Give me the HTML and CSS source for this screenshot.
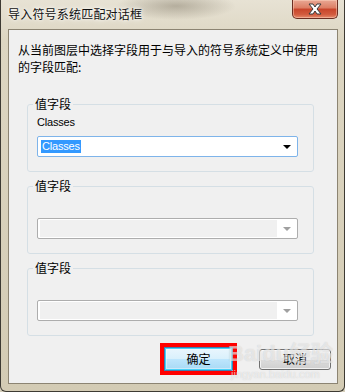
FILE: index.html
```html
<!DOCTYPE html>
<html lang="zh-CN">
<head>
    <meta charset="UTF-8">
    <title>导入符号系统匹配对话框</title>
    <link rel="stylesheet" href="styles.css">
</head>
<body>
    <div class="window">
        <div class="titlebar">
            <span class="title">导入符号系统匹配对话框</span>
            <button class="close" type="button">
                <svg width="16" height="12" viewBox="0 0 16 12">
                    <path d="M2 1h4l2 3 2-3h4l-4 5 4 5h-4l-2-3-2 3H2l4-5z" fill="#fff" stroke="#3a3a3a" stroke-width="1" stroke-linejoin="round"/>
                </svg>
            </button>
        </div>

        <div class="client">
            <p class="intro">从当前图层中选择字段用于与导入的符号系统定义中使用的字段匹配:</p>

            <fieldset class="group">
                <legend>值字段</legend>
                <div class="field-label">Classes</div>
                <div class="combo">
                    <span class="combo-text"><span class="sel">Classes</span></span>
                    <span class="arrow"></span>
                </div>
            </fieldset>

            <fieldset class="group">
                <legend>值字段</legend>
                <div class="field-label"></div>
                <div class="combo disabled">
                    <span class="combo-text"></span>
                    <span class="arrow"></span>
                </div>
            </fieldset>

            <fieldset class="group">
                <legend>值字段</legend>
                <div class="field-label"></div>
                <div class="combo disabled">
                    <span class="combo-text"></span>
                    <span class="arrow"></span>
                </div>
            </fieldset>

            <div class="buttons">
                <span class="mark"><button class="btn default" type="button">确定</button></span>
                <button class="btn" type="button">取消</button>
            </div>
        </div>

        <div class="watermark">
            <span class="wm-logo">Baidu经验</span>
            <span class="wm-url">jingyan.baidu.com</span>
        </div>
    </div>
</body>
</html>
```

FILE: styles.css
```css
body {
    margin: 0;
    background: #d6cfbb;
    font-family: "Noto Sans CJK SC", sans-serif;
    font-size: 12px;
    color: #000;
}

.window {
    position: relative;
    width: 345px;
    height: 392px;
    box-sizing: border-box;
    border: 1px solid #3d3a33;
    border-top: none;
    border-radius: 0 0 6px 6px;
    background:
        radial-gradient(ellipse 60px 14px at 175px 6px, rgba(90, 80, 60, 0.35), transparent),
        linear-gradient(to bottom, #e7e2d4 0, #ddd6c2 40px, #d3cbb4 100%);
    display: flex;
    flex-direction: column;
    overflow: hidden;
}

.titlebar {
    height: 29px;
    display: flex;
    justify-content: space-between;
    align-items: flex-start;
    padding: 0 6px 0 7px;
}

.title {
    padding-top: 5px;
    line-height: 17px;
    font-size: 12px;
    letter-spacing: 0.2px;
    color: #111;
    text-shadow: 0 0 6px #fff, 0 0 3px #fff;
}

.close {
    width: 46px;
    height: 19px;
    margin: 0;
    padding: 0;
    border: 1px solid #6b2e22;
    border-top: none;
    border-radius: 0 0 5px 5px;
    background: linear-gradient(to bottom, #e9a894 0, #dc7d63 45%, #c8442a 50%, #d25b3e 80%, #e58a6c 100%);
    box-shadow: inset 0 0 0 1px rgba(255, 220, 200, 0.45);
    display: flex;
    align-items: center;
    justify-content: center;
}

.client {
    flex: 1;
    margin: 0 6px 7px 7px;
    border: 1px solid #8c8472;
    background: #f0f0f0;
    padding: 11px 0 0 9px;
}

.intro {
    margin: 0;
    width: 302px;
    line-height: 17px;
}

.group {
    margin: 22px 0 0 9px;
    width: 287px;
    box-sizing: border-box;
    border: 1px solid #d5dfe5;
    border-radius: 3px;
    padding: 0 15px 14px 9px;
}

.group + .group {
    margin-top: 7px;
}

.group legend {
    margin-left: -4px;
    padding: 0 2px;
    line-height: 14px;
    font-size: 12px;
}

.field-label {
    height: 14px;
    margin-top: 4px;
    line-height: 14px;
    font-family: "Liberation Sans", sans-serif;
    font-size: 11px;
    letter-spacing: -0.2px;
}

.combo {
    margin-top: 7px;
    width: 261px;
    height: 21px;
    box-sizing: border-box;
    border: 1px solid #7eb4ea;
    border-radius: 2px;
    background: #fff;
    display: flex;
    align-items: center;
}

.combo-text {
    flex: 1;
    height: 15px;
    margin-left: 3px;
    display: flex;
    align-items: center;
}

.sel {
    background: #3399ff;
    color: #fff;
    font-family: "Liberation Sans", sans-serif;
    font-size: 11px;
    letter-spacing: -0.2px;
    line-height: 13px;
    padding: 0 1px;
}

.arrow {
    width: 0;
    height: 0;
    margin: 0 6px 0 6px;
    border-left: 4px solid transparent;
    border-right: 4px solid transparent;
    border-top: 4px solid #000;
}

.combo.disabled {
    border-color: #adadad;
}

.combo.disabled .combo-text {
    height: 17px;
    margin-left: 2px;
    background: #f0f0f0;
}

.combo.disabled .arrow {
    border-top-color: #a0a0a0;
}

.buttons {
    display: flex;
    justify-content: flex-end;
    align-items: center;
    gap: 22px;
    margin-top: 7px;
    padding-right: 6px;
}

.mark {
    border: 4px solid #ff0000;
    display: flex;
}

.btn {
    width: 72px;
    height: 21px;
    margin: 0;
    padding: 0;
    border: 1px solid #707070;
    border-radius: 3px;
    background: linear-gradient(to bottom, #f2f2f2 0, #ebebeb 50%, #dddddd 50%, #cfcfcf 100%);
    box-shadow: inset 0 0 0 1px rgba(255, 255, 255, 0.7);
    font-family: "Noto Sans CJK SC", sans-serif;
    font-size: 12px;
    line-height: 18px;
    color: #000;
}

.btn.default {
    width: 69px;
    height: 24px;
    border-color: #3c7fb1;
    border-radius: 0;
    box-shadow: inset 0 0 0 1px #48d1f8, inset 0 0 0 2px rgba(255, 255, 255, 0.4);
    background: linear-gradient(to bottom, #eaf6fd 0, #d9f0fc 50%, #bee6fd 50%, #a7d9f5 100%);
}

.watermark {
    position: absolute;
    left: 227px;
    top: 340px;
    display: flex;
    flex-direction: column;
    pointer-events: none;
}

.wm-logo {
    font-family: "Liberation Sans", "Noto Sans CJK SC", sans-serif;
    font-weight: bold;
    font-size: 22px;
    line-height: 28px;
    color: rgba(255, 255, 255, 0.55);
    text-shadow: 0 0 1px rgba(120, 120, 120, 0.35);
}

.wm-url {
    margin-left: 3px;
    font-family: "Liberation Sans", sans-serif;
    font-size: 11px;
    line-height: 12px;
    color: rgba(255, 255, 255, 0.6);
    text-shadow: 0 0 1px rgba(120, 120, 120, 0.35);
}
```
